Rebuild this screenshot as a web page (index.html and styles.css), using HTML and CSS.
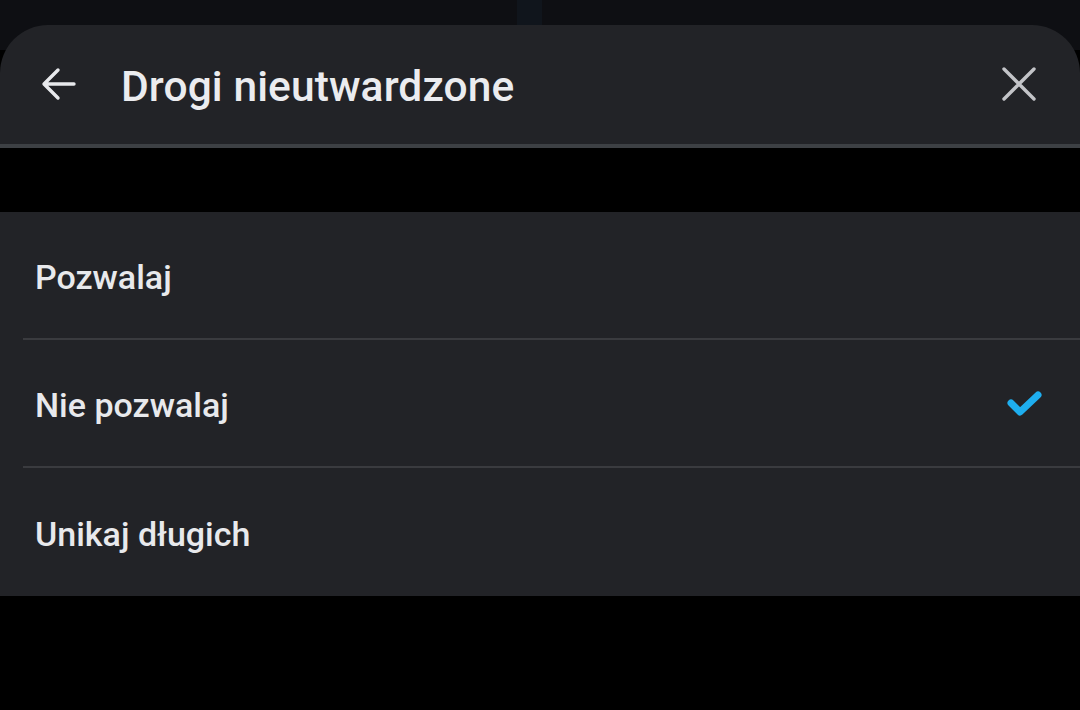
FILE: index.html
```html
<!DOCTYPE html>
<html lang="pl">
<head>
<meta charset="utf-8">
<link rel="stylesheet" href="styles.css">
</head>
<body>
<div class="backdrop">
  <div class="strip"></div>
</div>
<div class="sheet">
  <header class="header">
    <button class="icon-btn back" aria-label="Wstecz">
      <svg width="40" height="40" viewBox="0 0 40 40"><path d="M35 20H6M19 6L5 20l14 14" fill="none" stroke="#e8e9ec" stroke-width="3.4" stroke-linecap="round" stroke-linejoin="round"/></svg>
    </button>
    <h1 class="title">Drogi nieutwardzone</h1>
    <button class="icon-btn close" aria-label="Zamknij">
      <svg width="36" height="36" viewBox="0 0 36 36"><path d="M3 3L33 33M33 3L3 33" fill="none" stroke="#c3c4c8" stroke-width="3.4" stroke-linecap="round"/></svg>
    </button>
  </header>
  <div class="gap"></div>
  <ul class="list">
    <li class="row"><span>Pozwalaj</span></li>
    <li class="row"><span>Nie pozwalaj</span>
      <svg class="check" width="38" height="30" viewBox="0 0 38 30"><path d="M5 14L14 23L32 6" fill="none" stroke="#1eaeef" stroke-width="7" stroke-linecap="round" stroke-linejoin="round"/></svg>
    </li>
    <li class="row"><span>Unikaj długich</span></li>
  </ul>
</div>
</body>
</html>
```

FILE: styles.css
```css
* { box-sizing: border-box; }
html, body {
  margin: 0;
  padding: 0;
  background: #000;
  width: 1080px;
  height: 710px;
  overflow: hidden;
  font-family: Roboto, "Noto Sans", sans-serif;
}
.backdrop {
  height: 50px;
  background: #0e0f13;
  display: flex;
  justify-content: flex-start;
  padding-left: 517px;
}
.strip {
  width: 25px;
  height: 100%;
  background: #10151c;
}
.sheet {
  margin-top: -25px;
  position: relative;
}
.header {
  height: 123px;
  background: #222327;
  border-radius: 48px 48px 0 0;
  border-bottom: 4px solid #3d4044;
  display: flex;
  align-items: center;
  padding: 4px 0 0 36px;
}
.icon-btn {
  background: none;
  border: 0;
  padding: 0;
  display: flex;
  align-items: center;
  justify-content: center;
  cursor: pointer;
}
.back {
  width: 46px;
  height: 46px;
  margin-right: 39px;
  margin-top: -6px;
}
.title {
  margin: 0;
  font-size: 42.5px;
  font-weight: 500;
  color: #ebecef;
  flex: 1;
  letter-spacing: 0.1px;
}
.close {
  width: 46px;
  height: 46px;
  margin-right: 38px;
  margin-top: -6px;
}
.gap {
  height: 64px;
  background: #000;
}
.list {
  list-style: none;
  margin: 0;
  padding: 0 0 0 23px;
  background: #222327;
}
.row {
  height: 128px;
  display: flex;
  align-items: center;
  justify-content: space-between;
  padding: 0 36px 0 12px;
  font-size: 34px;
  font-weight: 500;
  color: #e8e9ec;
  border-bottom: 2px solid #3a3b3f;
}
.row span { padding-top: 4px; }
.row:last-child { border-bottom: 0; }
.check { margin-top: 2px; }
```
